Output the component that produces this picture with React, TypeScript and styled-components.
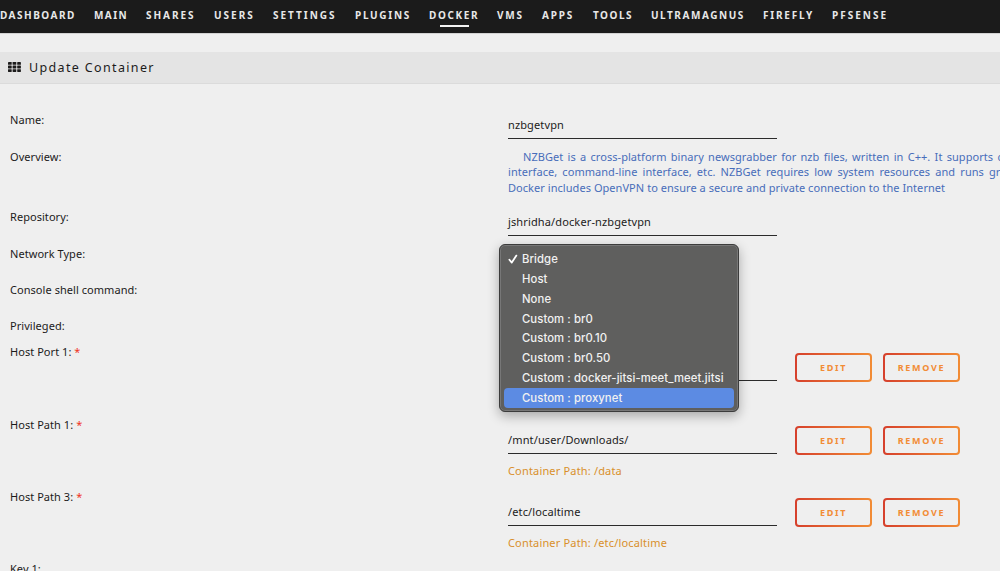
import React from 'react'
import styled, { createGlobalStyle } from 'styled-components'

type NavEntry = { name: string, width: number, spacing?: number, active?: boolean }

// width is the distance to the start of the next tab
const navEntries: NavEntry[] = [
    { name: 'DASHBOARD', width: 94, spacing: 1.5 },
    { name: 'MAIN', width: 52, spacing: 1.4 },
    { name: 'SHARES', width: 68, spacing: 1.95 },
    { name: 'USERS', width: 59, spacing: 2 },
    { name: 'SETTINGS', width: 82, spacing: 2 },
    { name: 'PLUGINS', width: 74, spacing: 1.7 },
    { name: 'DOCKER', width: 68, active: true, spacing: 1.6 },
    { name: 'VMS', width: 45 },
    { name: 'APPS', width: 51 },
    { name: 'TOOLS', width: 58, spacing: 1.5 },
    { name: 'ULTRAMAGNUS', width: 112, spacing: 1.55 },
    { name: 'FIREFLY', width: 69, spacing: 1.8 },
    { name: 'PFSENSE', width: 74, spacing: 2 },
]

const networks = [
    'Bridge',
    'Host',
    'None',
    'Custom : br0',
    'Custom : br0.10',
    'Custom : br0.50',
    'Custom : docker-jitsi-meet_meet.jitsi',
    'Custom : proxynet',
]

const NetworkMenu = () => {
    return (
        <Menu>
            {networks.map((name, i) => (
                <MenuItem key={name} $selected={name === 'Custom : proxynet'}>
                    <CheckSlot>
                        {i === 0 && (
                            <svg width="10" height="10" viewBox="0 0 10 10" fill="none" stroke="#fff" strokeWidth="1.8" strokeLinecap="round" strokeLinejoin="round">
                                <path d="M1.4 5.7L3.8 8.6L8.4 1.6" />
                            </svg>
                        )}
                    </CheckSlot>
                    {name}
                </MenuItem>
            ))}
        </Menu>
    )
}

const Buttons = () => {
    return (
        <ButtonGroup>
            <OutlineButton>EDIT</OutlineButton>
            <OutlineButton>REMOVE</OutlineButton>
        </ButtonGroup>
    )
}

const App = () => {
    return (
        <Page>
            <GlobalStyle />
            <NavBar>
                {navEntries.map(({ name, width, spacing, active }) => (
                    <NavItem key={name} $width={width} $spacing={spacing}>
                        <NavLabel $active={active}>{name}</NavLabel>
                    </NavItem>
                ))}
            </NavBar>
            <TitleBar>
                <svg width="13" height="10" viewBox="0 0 13 10" fill="#1c1b1b">
                    {[0, 3.6, 7.2].map(y => [0, 4.6, 9.2].map(x => (
                        <rect key={`${x}-${y}`} x={x} y={y} width="3.7" height="2.8" rx="0.4" />
                    )))}
                </svg>
                <Title>Update Container</Title>
            </TitleBar>
            <Form>
                <Row $height={37}>
                    <Label>Name:</Label>
                    <Input>nzbgetvpn</Input>
                </Row>
                <Row $height={60}>
                    <Label>Overview:</Label>
                    <Overview>
                        <OverviewLine $indent={15} $gap={1.35}>NZBGet is a cross-platform binary newsgrabber for nzb files, written in C++. It supports c</OverviewLine>
                        <OverviewLine $gap={2.2}>interface, command-line interface, etc. NZBGet requires low system resources and runs gre</OverviewLine>
                        <OverviewLine>Docker includes OpenVPN to ensure a secure and private connection to the Internet</OverviewLine>
                    </Overview>
                </Row>
                <Row $height={37}>
                    <Label>Repository:</Label>
                    <Input>jshridha/docker-nzbgetvpn</Input>
                </Row>
                <Row $height={36}>
                    <Label>Network Type:</Label>
                    <SelectField>
                        <NetworkMenu />
                    </SelectField>
                </Row>
                <Row $height={36}>
                    <Label>Console shell command:</Label>
                </Row>
                <Row $height={26}>
                    <Label>Privileged:</Label>
                </Row>
                <Row $height={73}>
                    <Label>Host Port 1: <Required>*</Required></Label>
                    <Input $offset={10} />
                    <Buttons />
                </Row>
                <Row $height={72}>
                    <Label>Host Path 1: <Required>*</Required></Label>
                    <div>
                        <Input $offset={10}>/mnt/user/Downloads/</Input>
                        <Hint>Container Path: /data</Hint>
                    </div>
                    <Buttons />
                </Row>
                <Row $height={72}>
                    <Label>Host Path 3: <Required>*</Required></Label>
                    <div>
                        <Input $offset={10}>/etc/localtime</Input>
                        <Hint>Container Path: /etc/localtime</Hint>
                    </div>
                    <Buttons />
                </Row>
                <Row $height={36}>
                    <Label>Key 1:</Label>
                </Row>
            </Form>
        </Page>
    )
}

const GlobalStyle = createGlobalStyle`
    body {
        margin: 0;
        overflow: hidden;
        background: #efefef;
    }
    * {
        box-sizing: border-box;
    }
`

const Page = styled.div`
    width: 1000px;
    height: 571px;
    overflow: hidden;
    background: #efefef;
    color: #1c1b1b;
    font-family: "Noto Sans", sans-serif;
    font-size: 11px;
    letter-spacing: 0.05px;
`

const NavBar = styled.nav`
    display: flex;
    height: 33px;
    background: #1b1b1b;
    box-shadow: 0 1px 0 #d2d2d2;
`

const NavItem = styled.div<{ $width: number, $spacing?: number }>`
    flex: 0 0 ${p => p.$width}px;
    letter-spacing: ${p => p.$spacing ?? 1.8}px;
    color: #e8e8e8;
    font-size: 10px;
    font-weight: 700;
    line-height: 30px;
    white-space: nowrap;
`

const NavLabel = styled.span<{ $active?: boolean }>`
    display: inline-block;
    height: 27px;
    background: ${p => p.$active ? 'linear-gradient(#f2f2f2, #f2f2f2) 11px 25px / 29px 2px no-repeat' : 'none'};
`

const TitleBar = styled.div`
    display: flex;
    align-items: center;
    height: 32px;
    margin-top: 19px;
    padding: 0 0 2px 8px;
    background: #e4e4e4;
    border-bottom: 1px solid #dbdbdb;
`

const Title = styled.span`
    margin-left: 8px;
    padding-top: 2px;
    font-size: 12.5px;
    letter-spacing: 1.35px;
`

const Form = styled.div`
    padding: 29px 0 0 10px;
`

const Row = styled.div<{ $height: number }>`
    display: grid;
    grid-template-columns: 498px 269px 1fr;
    align-items: start;
    height: ${p => p.$height}px;
`

const Label = styled.div`
    line-height: 13px;
    white-space: nowrap;
`

const Required = styled.span`
    color: #f0341c;
`

const Input = styled.div<{ $offset?: number }>`
    height: 27px;
    margin-top: ${p => (p.$offset ?? 0) - 1}px;
    border-bottom: 1px solid #2b2b2b;
    letter-spacing: 0.13px;
    line-height: 26px;
    white-space: nowrap;
`

const Hint = styled.div`
    margin-top: 9px;
    color: #d98f2b;
    letter-spacing: 0.17px;
    line-height: 15px;
    white-space: nowrap;
`

const Overview = styled.div`
    grid-column: 2 / 4;
    margin-top: -1px;
    color: #486dba;
    line-height: 15.3px;
    overflow: hidden;
`

const OverviewLine = styled.div<{ $indent?: number, $gap?: number }>`
    padding-left: ${p => p.$indent ?? 0}px;
    word-spacing: ${p => p.$gap ?? 0}px;
    white-space: nowrap;
`

const SelectField = styled.div`
    position: relative;
`

const Menu = styled.div`
    position: absolute;
    z-index: 2;
    top: -3px;
    left: -9px;
    width: 240px;
    height: 168px;
    padding: 4.4px 4px;
    background: #5f5f5e;
    border: 1px solid #3c3c3c;
    border-radius: 6px;
    box-shadow: inset 0 0 0 1px #777, 0 4px 12px rgba(0, 0, 0, 0.3);
    color: #f1f1f1;
    font-family: Inter, sans-serif;
    font-size: 11.3px;
    font-weight: 500;
    letter-spacing: 0.08px;
`

const MenuItem = styled.div<{ $selected: boolean }>`
    display: flex;
    align-items: center;
    height: 19.77px;
    border-radius: 4px;
    background: ${p => p.$selected ? '#5c8be3' : 'transparent'};
    line-height: 16px;
    white-space: nowrap;
`

const CheckSlot = styled.span`
    display: flex;
    flex: 0 0 18px;
    padding-left: 4px;
`

const ButtonGroup = styled.div`
    display: flex;
    gap: 11px;
    margin: 8px 0 0 18px;
`

const OutlineButton = styled.button`
    width: 77px;
    height: 29px;
    padding: 0;
    border: 2px solid transparent;
    border-radius: 4px;
    background:
        linear-gradient(#efefef, #efefef) padding-box,
        linear-gradient(90deg, #d6402c, #f28c35) border-box;
    color: #f28c35;
    font-family: "Noto Sans", sans-serif;
    font-size: 9px;
    font-weight: 700;
    letter-spacing: 1.7px;
`

export default App
